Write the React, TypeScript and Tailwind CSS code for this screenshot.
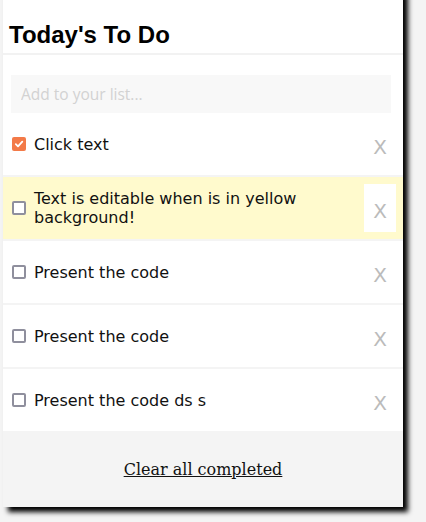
import React from "react";

const items = [
  { text: "Click text", done: true, editing: false },
  { text: "Text is editable when is in yellow background!", done: false, editing: true },
  { text: "Present the code", done: false, editing: false },
  { text: "Present the code", done: false, editing: false },
  { text: "Present the code ds s", done: false, editing: false },
];

function Check({ checked }: { checked: boolean }) {
  if (checked) {
    return (
      <span className="ml-[9px] mr-[8px] w-[14px] h-[14px] shrink-0 rounded-[2px] bg-[#f37a48] flex items-center justify-center">
        <svg width="10" height="10" viewBox="0 0 10 10" fill="none">
          <path d="M1.8 5.2 L4 7.4 L8.3 2.6" stroke="#fff" strokeWidth="1.8" strokeLinecap="round" strokeLinejoin="round" />
        </svg>
      </span>
    );
  }
  return (
    <span className="ml-[9px] mr-[8px] w-[14px] h-[14px] shrink-0 rounded-[2px] border-2 border-[#8f8f9d] bg-white" />
  );
}

export default function App() {
  return (
    <div className="min-h-[522px] bg-[#f4f4f4] overflow-hidden">
      <div className="ml-[3px] mt-[-10px] w-[400px] bg-white shadow-[5px_5px_5px_#000]">
        <div className="h-[65px] pt-[31px] px-[6px] border-b-2 border-[#f2f2f2]">
          <h1 className="text-[24px] leading-[28px] font-bold text-black [font-family:'Liberation_Sans',Arial,sans-serif]">
            Today's To Do
          </h1>
        </div>
        <div className="px-[8px] pt-[20px]">
          <input
            type="text"
            placeholder="Add to your list..."
            className="block w-[380px] h-[38px] bg-[#f8f8f8] px-[10px] text-[15.5px] outline-none placeholder:text-[#d2d2d2] [font-family:'Open_Sans',sans-serif]"
          />
        </div>
        <ul>
          {items.map((it, i) => (
            <li
              key={i}
              className={`flex items-center h-[64px] border-b-2 border-[#f4f4f4] ${
                it.editing ? "bg-[#fffacd]" : "bg-white"
              }`}
            >
              <Check checked={it.done} />
              <span className="flex-1 text-[16px] leading-[19px] text-[#111] [font-family:'DejaVu_Sans',sans-serif]">
                {it.text}
              </span>
              <button className="w-[32px] h-[48px] mr-[7px] ml-[4px] shrink-0 bg-white text-[20px] leading-none text-[#bbb] flex items-center justify-center pt-[5px] [font-family:'DejaVu_Sans',sans-serif]">
                X
              </button>
            </li>
          ))}
        </ul>
        <div className="h-[74px] bg-[#f4f4f4] flex items-center justify-center">
          <a
            href="#"
            className="text-[16px] text-[#111] underline [font-family:'DejaVu_Serif',serif]"
          >
            Clear all completed
          </a>
        </div>
      </div>
    </div>
  );
}
